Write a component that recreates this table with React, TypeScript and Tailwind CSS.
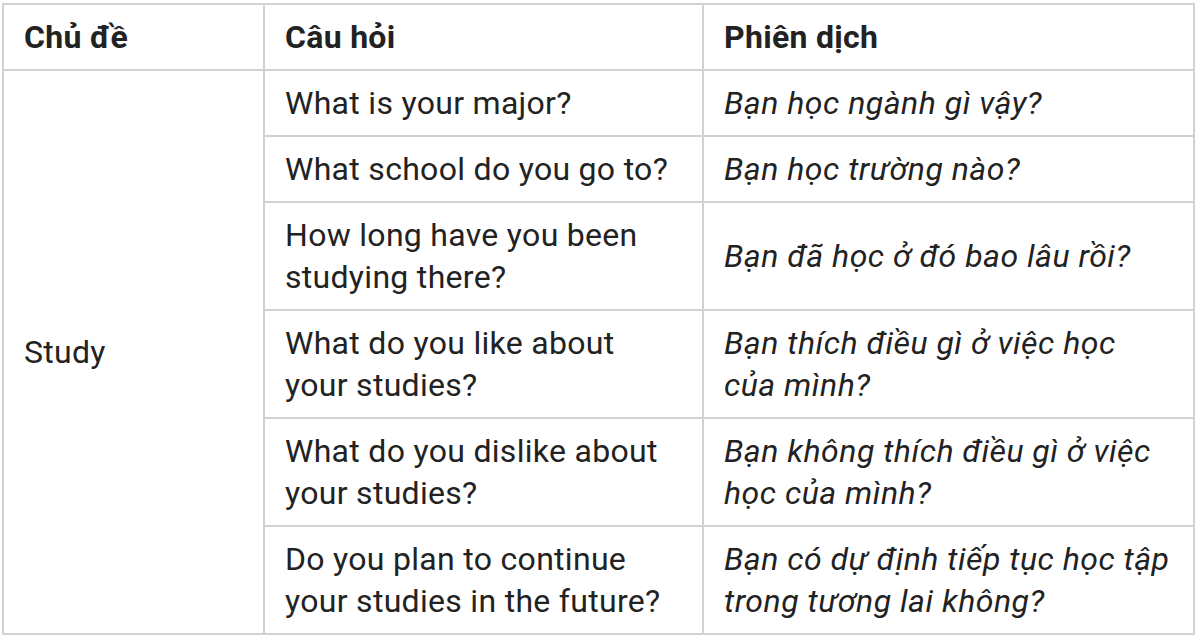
import React from "react";

const rows: { q: string; t: string }[] = [
  { q: "What is your major?", t: "Bạn học ngành gì vậy?" },
  { q: "What school do you go to?", t: "Bạn học trường nào?" },
  { q: "How long have you been studying there?", t: "Bạn đã học ở đó bao lâu rồi?" },
  { q: "What do you like about your studies?", t: "Bạn thích điều gì ở việc học của mình?" },
  { q: "What do you dislike about your studies?", t: "Bạn không thích điều gì ở việc học của mình?" },
  { q: "Do you plan to continue your studies in the future?", t: "Bạn có dự định tiếp tục học tập trong tương lai không?" },
];

export default function App() {
  const cell = "border-2 border-[#d2d2d2] px-[20px] py-[11px] align-middle";
  return (
    <div className="w-[1200px] h-[638px] bg-white overflow-hidden pl-[2px] pt-[3px] font-[Roboto,'Noto_Sans',sans-serif]">
      <table className="w-[1191px] table-fixed border-collapse text-[32px] leading-[42px] tracking-[0.3px] text-[#222]">
        <colgroup>
          <col className="w-[261px]" />
          <col className="w-[439px]" />
          <col className="w-[491px]" />
        </colgroup>
        <thead>
          <tr>
            <th className={`${cell} text-left font-bold`}>Chủ đề</th>
            <th className={`${cell} text-left font-bold`}>Câu hỏi</th>
            <th className={`${cell} text-left font-bold`}>Phiên dịch</th>
          </tr>
        </thead>
        <tbody>
          {rows.map((r, i) => (
            <tr key={i}>
              {i === 0 && (
                <td className={cell} rowSpan={rows.length}>Study</td>
              )}
              <td className={cell}>{r.q}</td>
              <td className={`${cell} italic tracking-[0.5px]`}>{r.t}</td>
            </tr>
          ))}
        </tbody>
      </table>
    </div>
  );
}
